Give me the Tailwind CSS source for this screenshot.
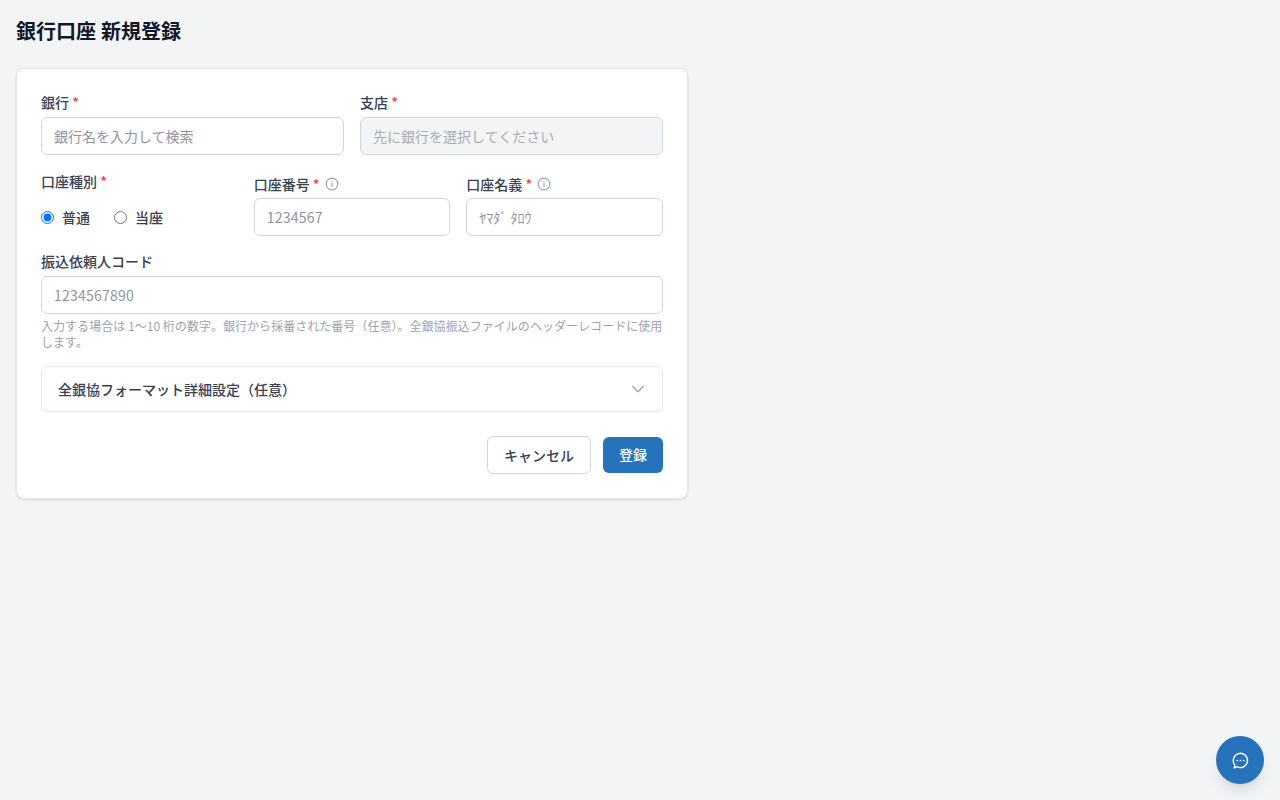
<!DOCTYPE html>
<html lang="ja">
<head>
  <meta charset="UTF-8" />
  <meta name="viewport" content="width=device-width, initial-scale=1.0" />
  <title>銀行口座 新規登録</title>
  <script src="https://cdn.jsdelivr.net/npm/@tailwindcss/browser@4"></script>
</head>
<body class="bg-[#f3f4f6] text-[#111827] font-['Noto_Sans_CJK_JP',sans-serif]">
  <div class="min-h-screen p-4">
    <h1 class="text-[20px] leading-[30px] font-bold mb-[22px] [word-spacing:0.5px]">銀行口座 新規登録</h1>

    <form class="w-[672px] h-[431px] bg-white border border-[#e5e7eb] rounded-lg shadow-[0_1px_3px_rgba(0,0,0,0.12)] px-6 pt-6">
      <div class="grid grid-cols-2 gap-4">
        <div>
          <label class="block h-[24px] text-sm leading-[19px] font-medium text-[#374151]">銀行 <span class="text-[#ef4444]">*</span></label>
          <input type="text" placeholder="銀行名を入力して検索" class="block w-full h-[38px] px-3 text-sm border border-[#d1d5db] rounded-md placeholder:text-[#8f949c] outline-none" />
        </div>
        <div>
          <label class="block h-[24px] text-sm leading-[19px] font-medium text-[#374151]">支店 <span class="text-[#ef4444]">*</span></label>
          <input type="text" disabled placeholder="先に銀行を選択してください" class="block w-full h-[38px] px-3 text-sm bg-[#f3f4f6] border border-[#d1d5db] rounded-md placeholder:text-[#a8acb3] outline-none" />
        </div>
      </div>

      <div class="grid grid-cols-3 gap-4 mt-4">
        <div>
          <label class="block text-sm leading-[22px] font-medium text-[#374151] -mt-[1px]">口座種別 <span class="text-[#ef4444]">*</span></label>
          <div class="flex items-center gap-6 mt-[15px]">
            <label class="flex items-center gap-2 text-sm font-medium text-[#374151]">
              <input type="radio" name="kind" checked class="w-[13px] h-[13px] accent-[#0075ff]" />普通
            </label>
            <label class="flex items-center gap-2 text-sm font-medium text-[#374151]">
              <input type="radio" name="kind" class="w-[13px] h-[13px]" />当座
            </label>
          </div>
        </div>
        <div>
          <label class="flex items-center gap-[5px] h-[27px] pb-[1px] text-sm font-medium text-[#374151]">
            <span>口座番号 <span class="text-[#ef4444]">*</span></span>
            <svg class="w-[14px] h-[14px] text-[#9ca3af]" viewBox="0 0 24 24" fill="none" stroke="currentColor" stroke-width="2" stroke-linecap="round"><circle cx="12" cy="12" r="10"/><path d="M12 16v-5M12 8h.01"/></svg>
          </label>
          <input type="text" placeholder="1234567" class="block w-full h-[38px] px-3 text-sm border border-[#d1d5db] rounded-md placeholder:text-[#8f949c] placeholder:tracking-[0.23px] outline-none" />
        </div>
        <div>
          <label class="flex items-center gap-[5px] h-[27px] pb-[1px] text-sm font-medium text-[#374151]">
            <span>口座名義 <span class="text-[#ef4444]">*</span></span>
            <svg class="w-[14px] h-[14px] text-[#9ca3af]" viewBox="0 0 24 24" fill="none" stroke="currentColor" stroke-width="2" stroke-linecap="round"><circle cx="12" cy="12" r="10"/><path d="M12 16v-5M12 8h.01"/></svg>
          </label>
          <input type="text" placeholder="ﾔﾏﾀﾞ ﾀﾛｳ" class="block w-full h-[38px] px-3 text-sm border border-[#d1d5db] rounded-md placeholder:text-[#8f949c] outline-none" />
        </div>
      </div>

      <div class="mt-4">
        <label class="block h-[24px] text-sm leading-[19px] font-medium text-[#374151]">振込依頼人コード</label>
        <input type="text" placeholder="1234567890" class="block w-full h-[38px] px-3 text-sm border border-[#d1d5db] rounded-md placeholder:text-[#8f949c] placeholder:tracking-[0.23px] outline-none" />
        <p class="mt-1 text-xs leading-4 tracking-[0.035px] text-[#9ca3af]">入力する場合は 1〜10 桁の数字。銀行から採番された番号（任意）。全銀協振込ファイルのヘッダーレコードに使用します。</p>
      </div>

      <div class="flex items-center justify-between h-[46px] mt-4 pl-4 pr-4 border border-[#e5e7eb] rounded-md">
        <span class="text-sm font-medium text-[#374151]">全銀協フォーマット詳細設定（任意）</span>
        <svg class="w-4 h-4 text-[#9ca3af]" viewBox="0 0 24 24" fill="none" stroke="currentColor" stroke-width="2" stroke-linecap="round" stroke-linejoin="round"><path d="M4 8l8 8 8-8"/></svg>
      </div>

      <div class="flex justify-end items-center gap-3 mt-6">
        <button type="button" class="w-[104px] h-[38px] bg-white border border-[#d1d5db] rounded-md text-sm font-medium text-[#374151]">キャンセル</button>
        <button type="submit" class="w-[60px] h-[36px] pb-[2px] bg-[#2672bb] rounded-md text-sm font-medium text-white">登録</button>
      </div>
    </form>
  </div>

  <button class="fixed right-4 bottom-4 w-12 h-12 rounded-full bg-[#2672bb] shadow-lg flex items-center justify-center text-white">
    <svg class="w-[19px] h-[19px]" viewBox="0 -1 24 24" fill="none" stroke="currentColor" stroke-width="1.7" stroke-linecap="round" stroke-linejoin="round">
      <path d="M7.5 18.8L4 20.5l.8-4A9 9 0 1 1 7.5 18.8z"/>
      <path d="M8 11h.01M12 11h.01M16 11h.01" stroke-width="2.2"/>
    </svg>
  </button>
</body>
</html>
